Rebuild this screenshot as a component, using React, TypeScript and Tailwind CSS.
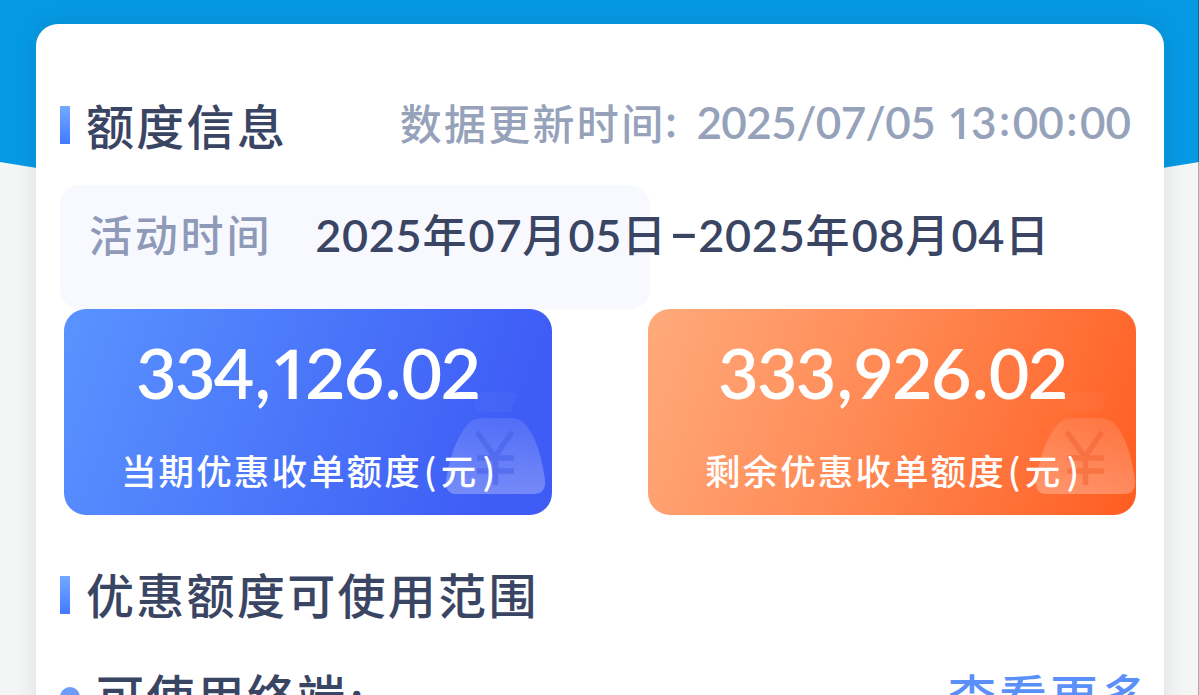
import React from "react";

const quotas = [
  {
    amount: "334,126.02",
    label: "当期优惠收单额度",
    card: "bg-[linear-gradient(110deg,#5a93ff_0%,#4b78fa_45%,#3f5ef6_85%,#3f5bf5_100%)]",
    amountClass: "ml-[72px]",
    labelClass: "ml-[57px]",
    bag: "-right-[1px]",
    yen: "#3f5de6",
  },
  {
    amount: "333,926.02",
    label: "剩余优惠收单额度",
    card: "bg-[linear-gradient(110deg,#ffaa7c_0%,#ff8a55_45%,#ff6a30_85%,#ff5c20_100%)]",
    amountClass: "ml-[70px]",
    labelClass: "ml-[57px]",
    bag: "-right-[7px]",
    yen: "#f2602e",
  },
];

const period = ["2025", "年", "07", "月", "05", "日", "–", "2025", "年", "08", "月", "04", "日"];

const periodClass = (part: string) => {
  if (part === "–") return "inline-block w-[30px] text-center text-[54px] font-semibold";
  if (/\d/.test(part)) return "text-[45px] font-semibold tracking-[0.7px]";
  return "text-[44px] font-medium tracking-[2.2px]";
};

// Lato's "1" has a foot, so that digit is set in Open Sans
const Amount: React.FC<{ value: string }> = ({ value }) => (
  <>
    {value.split("").map((char, i) => {
      if (char === "1") return <span key={i} className="-ml-[1px] -mr-[3px] font-['Open_Sans'] text-[69px]">1</span>;
      if (char === "," || char === ".") return <span key={i} className="mx-[2px]">{char}</span>;
      return char;
    })}
  </>
);

const MoneyBag: React.FC<{ id: string; yen: string; className: string }> = ({ id, yen, className }) => (
  <svg width="112" height="112" viewBox="0 0 112 112" fill="none" className={className}>
    <defs>
      <linearGradient id={id} x1="0" y1="0" x2="0" y2="1">
        <stop offset="0" stopColor="#fff" stopOpacity="0.1" />
        <stop offset="1" stopColor="#fff" stopOpacity="0.28" />
      </linearGradient>
    </defs>
    <path d="M31 13C40 9 68 9 78 12C74 18 72 22 71 27Q71 30 67 30H38Q34 30 34 26C33 21 31 17 31 13Z" fill="#fff" fillOpacity="0.03" />
    <path
      d="M41 36H70Q78 36 84 42C95 54 101 76 104 98Q105 112 93 112H16Q4 112 5 99C8 78 15 55 27 42Q33 36 41 36Z"
      fill={`url(#${id})`}
    />
    <path d="M36 50L54 75L71 50M36 76H73M36 89H73M54.500 75V103" stroke={yen} strokeOpacity="0.5" strokeWidth="5.500" />
  </svg>
);

const SectionTitle: React.FC<{ children: React.ReactNode; barClass?: string }> = ({ children, barClass = "" }) => (
  <div className="flex items-center">
    <span className={`h-[38px] w-[10px] bg-gradient-to-b from-[#74a9ff] to-[#4479ff] ${barClass}`}></span>
    <h2 className="ml-4 text-[48px] leading-[56px] font-medium tracking-[2.3px] text-[#3a4564]">{children}</h2>
  </div>
);

export default function App() {
  return (
    <div className="relative h-[695px] w-[1199px] overflow-hidden bg-[#f4f6f6] px-9 pt-6 font-[Lato,'Noto_Sans_CJK_SC',sans-serif] whitespace-nowrap">
      <div className="absolute inset-x-0 top-0 h-[260px] bg-[#0699e3] [clip-path:polygon(0_0,100%_0,100%_162px,50%_260px,0_162px)]"></div>
      <div className="absolute inset-y-0 right-0 w-px bg-black/30"></div>

      <main className="relative h-[700px] w-[1128px] rounded-t-[22px] bg-white pt-[75px] pr-[33px] pl-6 shadow-[0_0_24px_rgba(0,0,0,0.09)]">
        <header className="flex items-start justify-between">
          <SectionTitle barClass="mb-1">额度信息</SectionTitle>
          <p className="-mt-1 flex items-baseline text-[44px] leading-[56px] font-medium text-[#96a2ba]">
            <span className="text-[42px] tracking-[2.3px]">数据更新时间</span>
            <span className="relative -top-[3px] -ml-[3px] text-[34px] font-bold">：</span>
            <span className="relative -top-px font-semibold">
              <span className="tracking-[-0.6px]">2025/07/05 </span>
              <span className="ml-[2px] -mr-[1px] font-['Open_Sans'] text-[43px]">1</span>3
              <span className="relative -top-[3px] mx-[2.500px]">:</span>00
              <span className="relative -top-[3px] mx-[2.500px]">:</span>00
            </span>
          </p>
        </header>

        <div className="mt-[30px] flex h-[124px] w-[590px] items-start rounded-[20px] bg-[#f8f9ff] pt-[22px] pl-[29px] leading-[60px]">
          <span className="-mt-px text-[43px] font-medium tracking-[2.8px] text-[#8e9ab8]">活动时间</span>
          <span className="-mt-[2px] ml-[43px] text-[45px] text-[#3a4564]">
            {period.map((part, i) => (
              <span key={i} className={`leading-none ${periodClass(part)}`}>{part}</span>
            ))}
          </span>
        </div>

        <div className="ml-1 flex gap-24">
          {quotas.map((q) => (
            <div key={q.amount} className={`relative h-[206px] w-[488px] shrink-0 overflow-hidden rounded-[22px] text-white ${q.card}`}>
              <MoneyBag id={q.amount} yen={q.yen} className={`absolute bottom-[21px] ${q.bag}`} />
              <p className={`relative h-[103px] pt-[23px] text-[70px] leading-[80px] font-semibold tracking-[-1.7px] ${q.amountClass}`}>
                <Amount value={q.amount} />
              </p>
              <p className={`relative mt-[34px] flex text-[35.500px] leading-[52px] font-medium tracking-[2.1px] ${q.labelClass}`}>
                {q.label}
                <span className="-mt-[2px] ml-[2px] w-[17px] font-['Noto_Sans_CJK_SC']">(</span>
                <span>元</span>
                <span className="-mt-[2px] ml-[4px] font-['Noto_Sans_CJK_SC']">)</span>
              </p>
            </div>
          ))}
        </div>

        <section className="mt-[53px]">
          <SectionTitle barClass="mb-[2px]">优惠额度可使用范围</SectionTitle>
          <div className="mt-[44px] flex items-start justify-between">
            <div className="flex items-start">
              <span className="mt-[19px] size-5 rounded-full bg-[#6f9cf7]"></span>
              <h3 className="mt-px ml-4 text-[48px] leading-[56px] font-medium tracking-[2.3px] text-[#3a4564]">
                可使用终端<span className="ml-[3px] font-bold">:</span>
              </h3>
            </div>
            <a className="mt-px -mr-[21px] text-[48px] leading-[56px] font-medium tracking-[3px] text-[#5b8ff9]">查看更多</a>
          </div>
        </section>
      </main>
    </div>
  );
}
